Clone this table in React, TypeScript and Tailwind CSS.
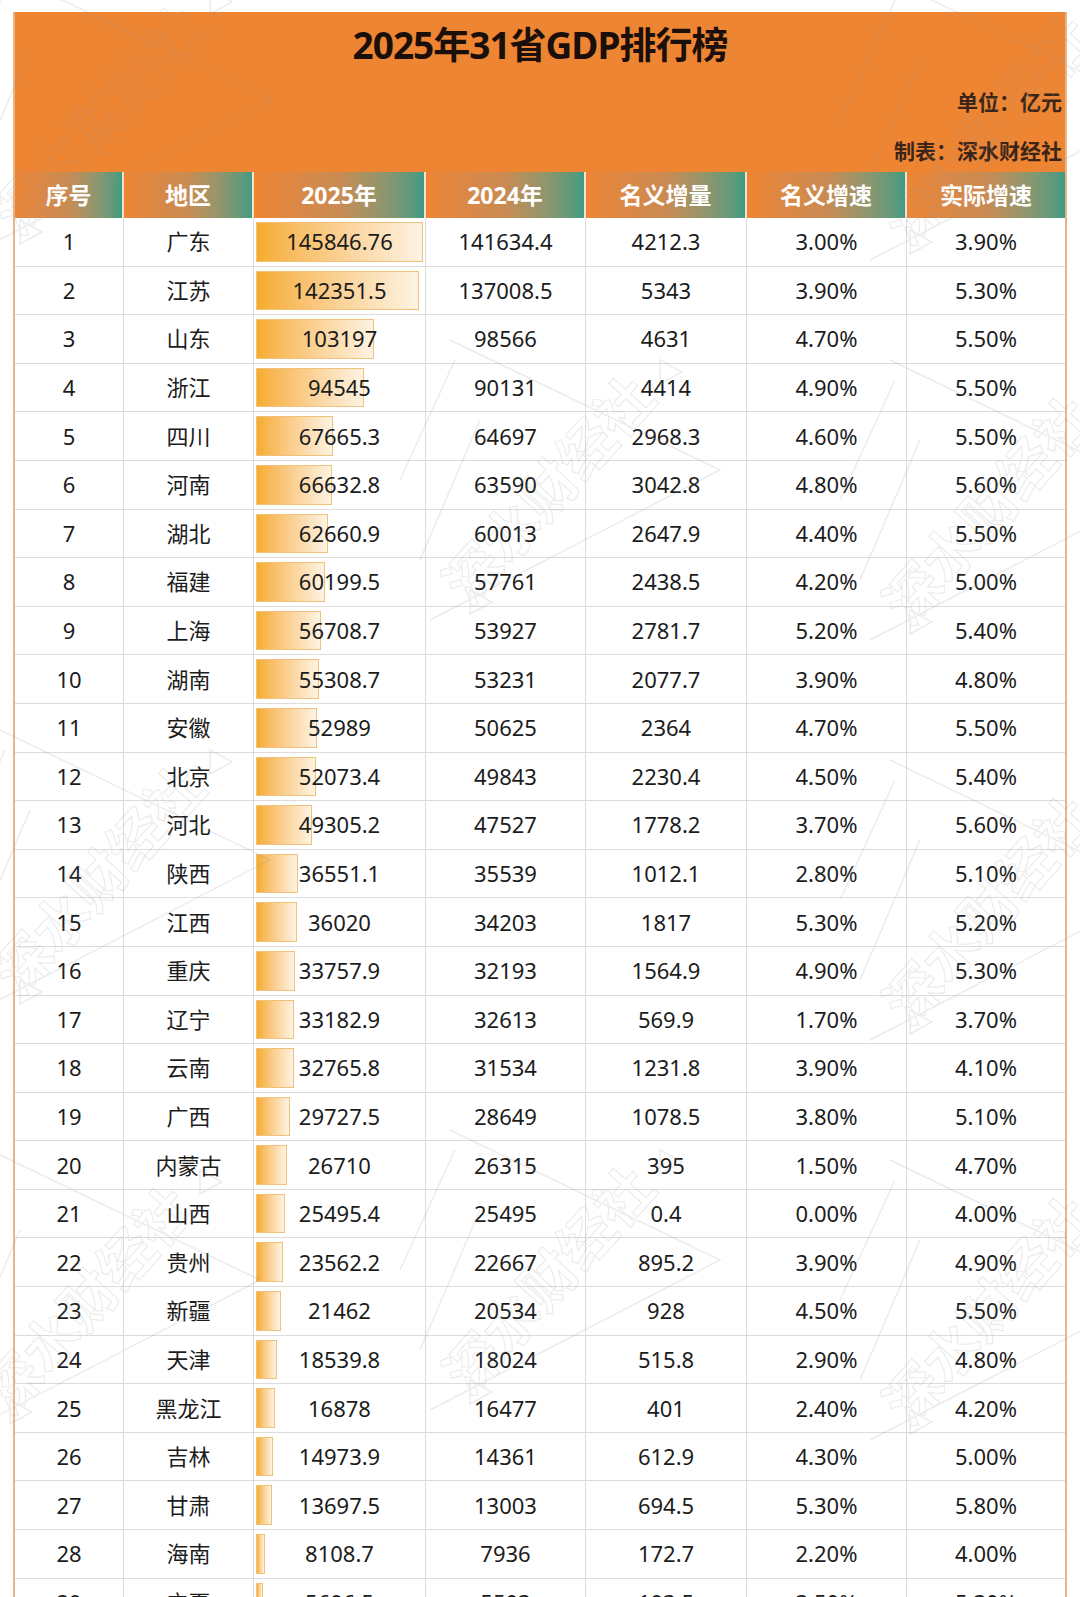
const rows: [number, string, number, string, string, string, string][] = [
  [1, '广东', 145846.76, '141634.4', '4212.3', '3.00%', '3.90%'],
  [2, '江苏', 142351.5, '137008.5', '5343', '3.90%', '5.30%'],
  [3, '山东', 103197, '98566', '4631', '4.70%', '5.50%'],
  [4, '浙江', 94545, '90131', '4414', '4.90%', '5.50%'],
  [5, '四川', 67665.3, '64697', '2968.3', '4.60%', '5.50%'],
  [6, '河南', 66632.8, '63590', '3042.8', '4.80%', '5.60%'],
  [7, '湖北', 62660.9, '60013', '2647.9', '4.40%', '5.50%'],
  [8, '福建', 60199.5, '57761', '2438.5', '4.20%', '5.00%'],
  [9, '上海', 56708.7, '53927', '2781.7', '5.20%', '5.40%'],
  [10, '湖南', 55308.7, '53231', '2077.7', '3.90%', '4.80%'],
  [11, '安徽', 52989, '50625', '2364', '4.70%', '5.50%'],
  [12, '北京', 52073.4, '49843', '2230.4', '4.50%', '5.40%'],
  [13, '河北', 49305.2, '47527', '1778.2', '3.70%', '5.60%'],
  [14, '陕西', 36551.1, '35539', '1012.1', '2.80%', '5.10%'],
  [15, '江西', 36020, '34203', '1817', '5.30%', '5.20%'],
  [16, '重庆', 33757.9, '32193', '1564.9', '4.90%', '5.30%'],
  [17, '辽宁', 33182.9, '32613', '569.9', '1.70%', '3.70%'],
  [18, '云南', 32765.8, '31534', '1231.8', '3.90%', '4.10%'],
  [19, '广西', 29727.5, '28649', '1078.5', '3.80%', '5.10%'],
  [20, '内蒙古', 26710, '26315', '395', '1.50%', '4.70%'],
  [21, '山西', 25495.4, '25495', '0.4', '0.00%', '4.00%'],
  [22, '贵州', 23562.2, '22667', '895.2', '3.90%', '4.90%'],
  [23, '新疆', 21462, '20534', '928', '4.50%', '5.50%'],
  [24, '天津', 18539.8, '18024', '515.8', '2.90%', '4.80%'],
  [25, '黑龙江', 16878, '16477', '401', '2.40%', '4.20%'],
  [26, '吉林', 14973.9, '14361', '612.9', '4.30%', '5.00%'],
  [27, '甘肃', 13697.5, '13003', '694.5', '5.30%', '5.80%'],
  [28, '海南', 8108.7, '7936', '172.7', '2.20%', '4.00%'],
  [29, '宁夏', 5696.5, '5503', '193.5', '3.50%', '5.30%'],
]

const headers = ['序号', '地区', '2025年', '2024年', '名义增量', '名义增速', '实际增速']
const cols = 'grid grid-cols-[109px_130px_172px_160px_161px_160px_158px]'
const maxGdp = 145846.76

// faint watermark tile, repeated over the sheet
function Mark({ x, y }: { x: number; y: number }) {
  return (
    <svg className="absolute" style={{ left: x - 160, top: y - 170 }} width="440" height="360" viewBox="0 0 440 360" fill="none" stroke="#9a9a9a" strokeWidth="1.5">
      <text x="40" y="250" transform="rotate(-48 140 200)" fontSize="56" fontFamily="'Noto Sans CJK SC', sans-serif" fontWeight="700" stroke="#9a9a9a" strokeWidth="1.2" fill="none">深水财经社</text>
      <path d="M90 40 L360 170 L70 320" />
      <path d="M40 180 L95 60 M60 260 L120 120" />
      <path d="M110 290 l22 12 l-22 12 z M300 60 l22 12 l-22 12 z" />
    </svg>
  )
}

export default function App() {
  const marks = [
    [70, 100], [520, 470], [960, 110],
    [70, 860], [960, 490], [520, 1260],
    [960, 890], [60, 1280], [960, 1290],
  ]
  return (
    <div className="relative w-[1080px] h-[1597px] overflow-hidden bg-white pt-[12px] font-['Noto_Sans','Noto_Sans_CJK_SC',sans-serif]">
      <div className="ml-[13px] w-[1054px] border-x-2 border-[#e6b58a]">
        <div className="h-[160px] bg-[#ee8533] flex flex-col">
          <h1 className="text-center text-[37px] font-bold tracking-[-1px] text-[#1a0f0a] leading-none pt-[14px]">
            2025年31省GDP排行榜
          </h1>
          <div className="mt-auto flex flex-col items-end pr-[3px] pb-[10px] text-[21px] font-bold text-[#3b2418] leading-none gap-[28px]">
            <span>单位：亿元</span>
            <span>制表：深水财经社</span>
          </div>
        </div>
        <div className={`${cols} h-[46px] bg-[#ee8533]`}>
          {headers.map((h, i) => (
            <div
              key={h}
              className={`flex items-center justify-center bg-linear-to-r from-[#ee8533] via-[#c98b52] to-[#3d9b82] text-white font-bold text-[23px] ${i < 6 ? 'border-r-2 border-[#f3e2cf]' : ''}`}
            >
              {h}
            </div>
          ))}
        </div>
        {rows.map(r => (
          <div key={r[0]} className={`${cols} h-[48.6px] text-[22px] text-[#1c1c1c]`}>
            <div className="flex items-center justify-center border-r border-b border-[#dcdcdc]">{r[0]}</div>
            <div className="flex items-center justify-center border-r border-b border-[#dcdcdc]">{r[1]}</div>
            <div className="relative flex items-center justify-center border-r border-b border-[#dcdcdc]">
              <div
                className="absolute left-[2px] top-[4px] bottom-[4px] border border-[#efc17a] bg-linear-to-r from-[#f6ac28] to-[#fdf3e2]"
                style={{ width: (r[2] / maxGdp) * 167 }}
              />
              <span className="relative">{r[2]}</span>
            </div>
            <div className="flex items-center justify-center border-r border-b border-[#dcdcdc]">{r[3]}</div>
            <div className="flex items-center justify-center border-r border-b border-[#dcdcdc]">{r[4]}</div>
            <div className="flex items-center justify-center border-r border-b border-[#dcdcdc]">{r[5]}</div>
            <div className="flex items-center justify-center border-b border-[#dcdcdc]">{r[6]}</div>
          </div>
        ))}
      </div>
      <div className="pointer-events-none absolute inset-0 opacity-[0.18]">
        {marks.map(([x, y]) => (
          <Mark key={`${x}-${y}`} x={x} y={y} />
        ))}
      </div>
    </div>
  )
}
